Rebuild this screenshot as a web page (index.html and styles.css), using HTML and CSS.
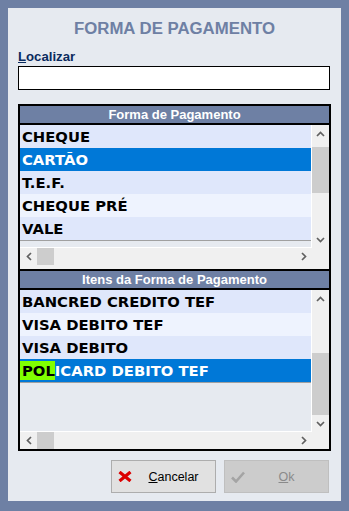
FILE: index.html
```html
<!DOCTYPE html>
<html lang="pt">
<head>
<meta charset="utf-8">
<title>Forma de Pagamento</title>
<link rel="stylesheet" href="styles.css">
</head>
<body>
<div class="window">
  <div class="title">FORMA DE PAGAMENTO</div>
  <label class="label" for="busca"><u>L</u>ocalizar</label>
  <input class="search" id="busca" type="text">

  <div class="grid grid-first">
    <div class="grid-head">Forma de Pagamento</div>
    <div class="grid-main grid-main-1">
      <div class="data">
        <div class="rows">
          <div class="row odd">CHEQUE</div>
          <div class="row sel">CARTÃO</div>
          <div class="row odd">T.E.F.</div>
          <div class="row even">CHEQUE PRÉ</div>
          <div class="row odd">VALE</div>
        </div>
      </div>
      <div class="vscroll">
        <div class="vbtn"><svg width="9" height="6" viewBox="0 0 9 6"><polyline points="1,5 4.5,1.5 8,5" fill="none" stroke="#606060" stroke-width="1.7"/></svg></div>
        <div class="vtrack"><div class="vthumb vthumb-1"></div></div>
        <div class="vbtn"><svg width="9" height="6" viewBox="0 0 9 6"><polyline points="1,1 4.5,4.5 8,1" fill="none" stroke="#606060" stroke-width="1.7"/></svg></div>
      </div>
    </div>
    <div class="hbar hbar-pad">
      <div class="hscroll">
        <div class="hbtn"><svg width="6" height="9" viewBox="0 0 6 9"><polyline points="5,1 1.5,4.5 5,8" fill="none" stroke="#606060" stroke-width="1.7"/></svg></div>
        <div class="hthumb"></div>
        <div class="htrack"></div>
        <div class="hbtn"><svg width="6" height="9" viewBox="0 0 6 9"><polyline points="1,1 4.5,4.5 1,8" fill="none" stroke="#606060" stroke-width="1.7"/></svg></div>
      </div>
      <div class="corner"></div>
    </div>
  </div>

  <div class="grid grid-second">
    <div class="grid-head">Itens da Forma de Pagamento</div>
    <div class="grid-main grid-main-2">
      <div class="data">
        <div class="rows">
          <div class="row odd">BANCRED CREDITO TEF</div>
          <div class="row even">VISA DEBITO TEF</div>
          <div class="row odd">VISA DEBITO</div>
          <div class="row sel"><span class="match">POL</span>ICARD DEBITO TEF</div>
        </div>
      </div>
      <div class="vscroll">
        <div class="vbtn"><svg width="9" height="6" viewBox="0 0 9 6"><polyline points="1,5 4.5,1.5 8,5" fill="none" stroke="#606060" stroke-width="1.7"/></svg></div>
        <div class="vtrack vtrack-end"><div class="vthumb vthumb-2"></div></div>
        <div class="vbtn"><svg width="9" height="6" viewBox="0 0 9 6"><polyline points="1,1 4.5,4.5 8,1" fill="none" stroke="#606060" stroke-width="1.7"/></svg></div>
      </div>
    </div>
    <div class="hbar">
      <div class="hscroll">
        <div class="hbtn"><svg width="6" height="9" viewBox="0 0 6 9"><polyline points="5,1 1.5,4.5 5,8" fill="none" stroke="#606060" stroke-width="1.7"/></svg></div>
        <div class="hthumb"></div>
        <div class="htrack"></div>
        <div class="hbtn"><svg width="6" height="9" viewBox="0 0 6 9"><polyline points="1,1 4.5,4.5 1,8" fill="none" stroke="#606060" stroke-width="1.7"/></svg></div>
      </div>
      <div class="corner"></div>
    </div>
  </div>

  <div class="buttons">
    <button class="btn btn-cancel" type="button">
      <span class="btn-icon"><svg width="14" height="11" viewBox="0 0 14 11"><path d="M1.5 1 L12.5 10 M12.5 1 L1.5 10" stroke="#dc0000" stroke-width="3.2" fill="none"/></svg></span>
      <span class="btn-text"><u>C</u>ancelar</span>
    </button>
    <button class="btn btn-ok" type="button" disabled>
      <span class="btn-icon"><svg width="14" height="12" viewBox="0 0 14 12"><polyline points="1,6.5 5,10.5 13,1.5" fill="none" stroke="#a4a4a4" stroke-width="2.6"/></svg></span>
      <span class="btn-text"><u>O</u>k</span>
    </button>
  </div>
</div>
</body>
</html>
```

FILE: styles.css
```css
html, body {
  margin: 0;
  padding: 0;
  background: #6e80a4;
}

.window {
  margin: 8px 8px 10px 8px;
  width: 333px;
  height: 493px;
  box-sizing: border-box;
  background: #e6eaf0;
  padding: 0 10px 0 10px;
  display: flex;
  flex-direction: column;
}

.title {
  margin-top: 11px;
  height: 20px;
  line-height: 20px;
  text-align: center;
  font-family: "Liberation Sans", Arial, sans-serif;
  font-weight: bold;
  font-size: 16.8px;
  color: #6e80a4;
  white-space: nowrap;
}

.label {
  margin-top: 10px;
  height: 16px;
  line-height: 16px;
  font-family: "Liberation Sans", Arial, sans-serif;
  font-weight: bold;
  font-size: 13.2px;
  color: #0b2b5e;
}

.search {
  margin: 1px 0 0 0;
  width: 312px;
  height: 24px;
  box-sizing: border-box;
  border: 1px solid #000;
  background: #fff;
  padding: 0 3px;
  outline: none;
}

.grid {
  width: 313px;
  box-sizing: border-box;
  border-left: 2px solid #000;
  border-right: 2px solid #000;
  border-bottom: 2px solid #000;
  background: #f0f0f0;
  display: flex;
  flex-direction: column;
}

.grid-first {
  margin-top: 14px;
  border-top: 2px solid #000;
}

.grid-head {
  height: 17px;
  line-height: 17px;
  background: #6e80a4;
  border-bottom: 2px solid #000;
  color: #fff;
  text-align: center;
  font-family: "Liberation Sans", Arial, sans-serif;
  font-weight: bold;
  font-size: 13px;
  white-space: nowrap;
}

.grid-main {
  display: flex;
}

.grid-main-1 { height: 123px; }
.grid-main-2 { height: 142px; }

.data {
  flex: 1;
  background: #e6eaf0;
  border-right: 1px solid #fff;
  border-bottom: 1px solid #fff;
  overflow: hidden;
}

.rows {
  border-bottom: 1px solid #a0a0a0;
}

.row {
  height: 23px;
  line-height: 23px;
  padding-left: 2px;
  font-family: "DejaVu Sans", Verdana, sans-serif;
  font-weight: bold;
  font-size: 14.8px;
  color: #000;
  white-space: nowrap;
}

.row.odd { background: #dfe7fb; }
.row.even { background: #eef3fe; }
.row.sel { background: #0078d7; color: #fff; }

.match {
  display: inline-block;
  line-height: 19px;
  margin-left: -2px;
  padding-left: 2px;
  background: #80ff00;
  color: #000;
}

.vscroll {
  width: 17px;
  display: flex;
  flex-direction: column;
  background: #f0f0f0;
}

.vbtn {
  height: 17px;
  display: flex;
  align-items: center;
  justify-content: center;
}

.vtrack {
  flex: 1;
  display: flex;
  flex-direction: column;
}

.vtrack-end {
  justify-content: flex-end;
}

.vthumb {
  background: #cdcdcd;
}

.vthumb-1 {
  margin-top: 5px;
  height: 46px;
}

.vthumb-2 {
  height: 62px;
}

.hbar {
  display: flex;
  height: 17px;
}

.hbar-pad {
  height: 21px;
  align-items: flex-start;
}

.hscroll {
  flex: 1;
  height: 17px;
  display: flex;
  background: #f0f0f0;
}

.hbtn {
  width: 17px;
  display: flex;
  align-items: center;
  justify-content: center;
}

.hthumb {
  width: 17px;
  background: #cdcdcd;
}

.htrack {
  flex: 1;
}

.corner {
  width: 17px;
  height: 17px;
  background: #f0f0f0;
}

.buttons {
  margin-top: 9px;
  padding-right: 2px;
  display: flex;
  justify-content: flex-end;
  gap: 8px;
}

.btn {
  width: 105px;
  height: 33px;
  box-sizing: border-box;
  margin: 0;
  padding: 0 0 0 6px;
  display: flex;
  align-items: center;
  font-family: "Liberation Sans", Arial, sans-serif;
  font-size: 12.5px;
}

.btn-cancel {
  background: #e1e1e1;
  border: 1px solid #adadad;
  color: #000;
}

.btn-ok {
  background: #cccccc;
  border: 1px solid #bfbfbf;
  color: #8a8a8a;
}

.btn-icon {
  width: 14px;
  height: 12px;
  display: flex;
  align-items: center;
}

.btn-text {
  flex: 1;
  text-align: center;
}
```
